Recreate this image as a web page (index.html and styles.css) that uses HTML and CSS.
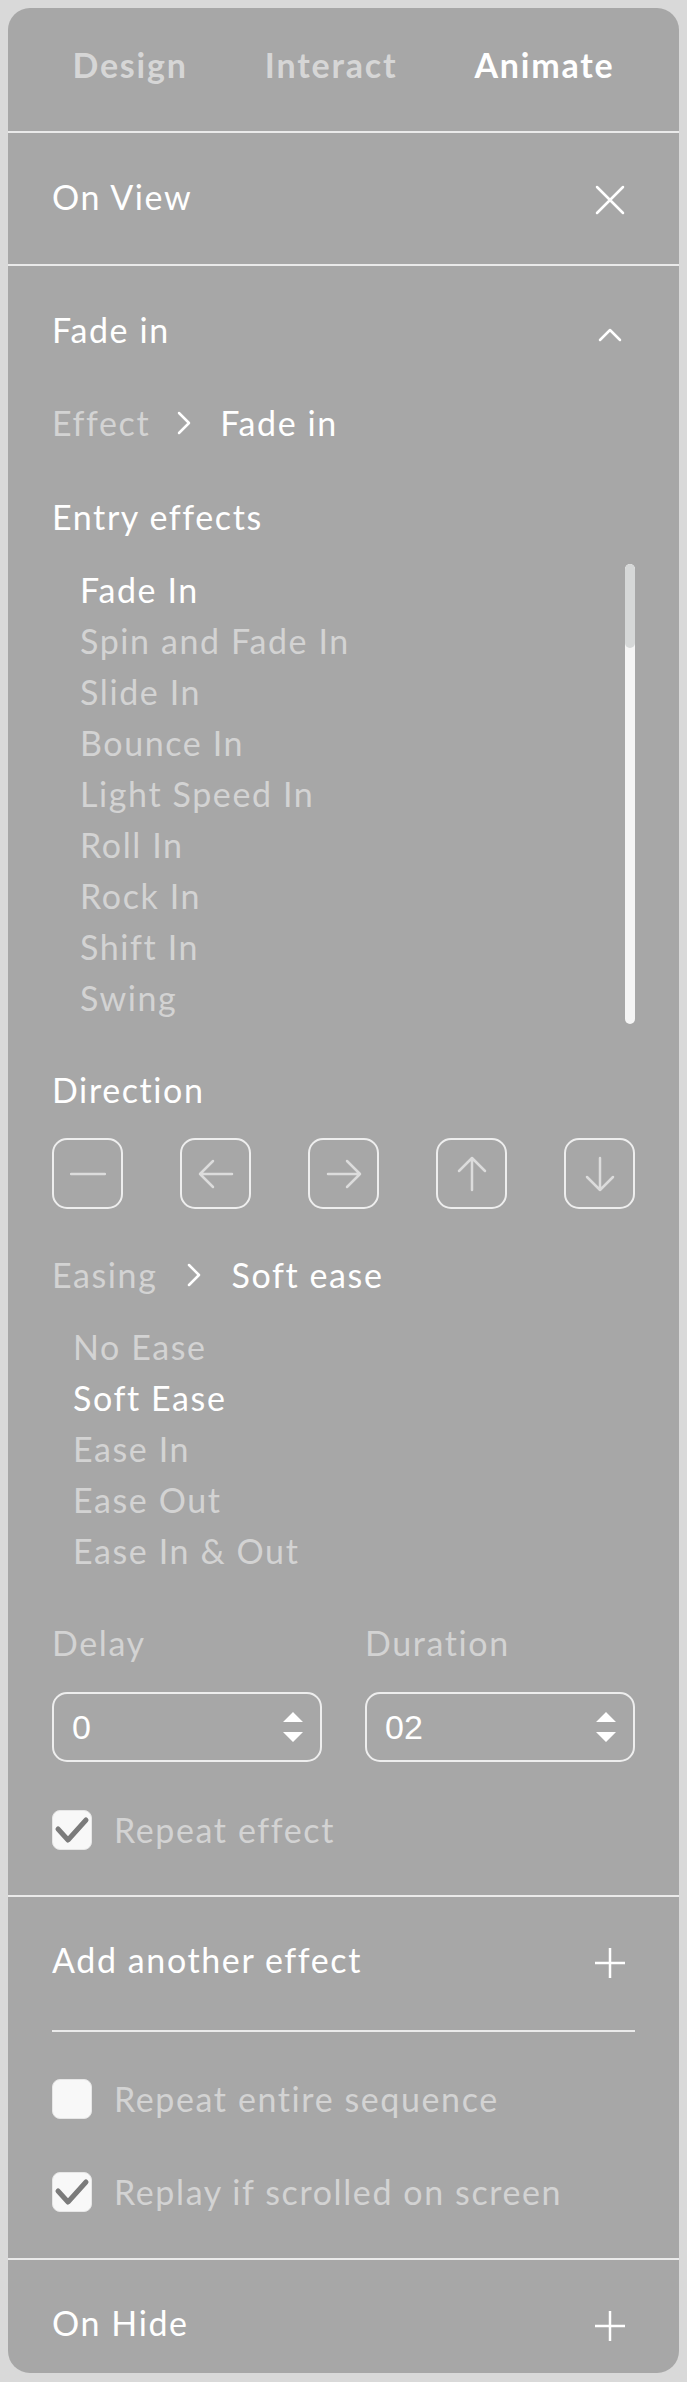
FILE: index.html
```html
<!DOCTYPE html>
<html lang="en">
    <head>
        <meta charset="UTF-8" />
        <meta name="viewport" content="width=device-width, initial-scale=1" />
        <link rel="stylesheet" href="styles.css">
        <title>Animate</title>
    </head>

    <body>
        <section class="panel">
            <nav class="tabs">
                <span>Design</span>
                <span>Interact</span>
                <span class="active">Animate</span>
            </nav>

            <div class="row head">
                <p>On View</p>
                <span class="icon">
                    <svg viewBox="0 0 30 30" width="30" height="30">
                        <path d="M2 2 L28 28 M28 2 L2 28" />
                    </svg>
                </span>
            </div>

            <div class="effect">
                <div class="row">
                    <p>Fade in</p>
                    <span class="icon">
                        <svg viewBox="0 0 30 30" width="30" height="30">
                            <path d="M5 22 L15 12 L25 22" />
                        </svg>
                    </span>
                </div>

                <div class="crumb">
                    <span class="muted">Effect</span>
                    <svg class="chev" viewBox="0 0 16 24" width="16" height="24">
                        <path d="M3 2 L13 12 L3 22" />
                    </svg>
                    <span>Fade in</span>
                </div>

                <p class="label">Entry effects</p>

                <div class="effects">
                    <ul>
                        <li class="active">Fade In</li>
                        <li>Spin and Fade In</li>
                        <li>Slide In</li>
                        <li>Bounce In</li>
                        <li>Light Speed In</li>
                        <li>Roll In</li>
                        <li>Rock In</li>
                        <li>Shift In</li>
                        <li>Swing</li>
                    </ul>
                    <div class="scrollbar"><div class="thumb"></div></div>
                </div>

                <p class="label direction">Direction</p>

                <ul class="dirs">
                    <li>
                        <svg viewBox="0 0 36 36" width="36" height="36">
                            <path d="M1 18 L35 18" />
                        </svg>
                    </li>
                    <li>
                        <svg viewBox="0 0 36 36" width="36" height="36">
                            <path d="M34 18 L2 18 M15 5 L2 18 L15 31" />
                        </svg>
                    </li>
                    <li>
                        <svg viewBox="0 0 36 36" width="36" height="36">
                            <path d="M2 18 L34 18 M21 5 L34 18 L21 31" />
                        </svg>
                    </li>
                    <li>
                        <svg viewBox="0 0 36 36" width="36" height="36">
                            <path d="M18 34 L18 2 M5 15 L18 2 L31 15" />
                        </svg>
                    </li>
                    <li>
                        <svg viewBox="0 0 36 36" width="36" height="36">
                            <path d="M18 2 L18 34 M5 21 L18 34 L31 21" />
                        </svg>
                    </li>
                </ul>

                <div class="crumb easing">
                    <span class="muted">Easing</span>
                    <svg class="chev" viewBox="0 0 16 24" width="16" height="24">
                        <path d="M3 2 L13 12 L3 22" />
                    </svg>
                    <span>Soft ease</span>
                </div>

                <ul class="ease-list">
                    <li>No Ease</li>
                    <li class="active">Soft Ease</li>
                    <li>Ease In</li>
                    <li>Ease Out</li>
                    <li>Ease In &amp; Out</li>
                </ul>

                <div class="fields">
                    <label class="muted">Delay</label>
                    <label class="muted">Duration</label>
                    <div class="number">
                        <span>0</span>
                        <svg viewBox="0 0 20 30" width="20" height="30">
                            <path d="M10 0 L20 10 L0 10 Z M0 20 L20 20 L10 30 Z" />
                        </svg>
                    </div>
                    <div class="number">
                        <span>02</span>
                        <svg viewBox="0 0 20 30" width="20" height="30">
                            <path d="M10 0 L20 10 L0 10 Z M0 20 L20 20 L10 30 Z" />
                        </svg>
                    </div>
                </div>

                <div class="check first">
                    <span class="box checked">
                        <svg viewBox="0 0 40 40" width="40" height="40">
                            <path d="M6 19 L16 30 L34 10" />
                        </svg>
                    </span>
                    <span class="muted">Repeat effect</span>
                </div>
            </div>

            <div class="add">
                <div class="row">
                    <p>Add another effect</p>
                    <span class="icon">
                        <svg viewBox="0 0 30 30" width="30" height="30">
                            <path d="M15 0 L15 30 M0 15 L30 15" />
                        </svg>
                    </span>
                </div>
                <hr />
                <div class="check">
                    <span class="box"></span>
                    <span class="muted">Repeat entire sequence</span>
                </div>
                <div class="check second">
                    <span class="box checked">
                        <svg viewBox="0 0 40 40" width="40" height="40">
                            <path d="M6 19 L16 30 L34 10" />
                        </svg>
                    </span>
                    <span class="muted">Replay if scrolled on screen</span>
                </div>
            </div>

            <div class="row foot">
                <p>On Hide</p>
                <span class="icon">
                    <svg viewBox="0 0 30 30" width="30" height="30">
                        <path d="M15 0 L15 30 M0 15 L30 15" />
                    </svg>
                </span>
            </div>
        </section>
    </body>
</html>
```

FILE: styles.css
```css
html {
    background-color: #d9d9d9;
}
body {
    margin: 8px;
    font-family: "Lato", "Open Sans", sans-serif;
    font-size: 34px;
    letter-spacing: 1.6px;
    color: #ffffff;
}
p,
ul {
    margin: 0;
    padding: 0;
    list-style: none;
}

.panel {
    background-color: #a7a7a7;
    border-radius: 22px;
    overflow: hidden;
}

/* tabs */
.tabs {
    display: flex;
    justify-content: center;
    gap: 77px;
    padding: 37px 0 46px;
    line-height: 40px;
    font-weight: 700;
    letter-spacing: 1.8px;
    color: #d6d6d6;
    border-bottom: 2px solid #eaeaea;
}
.tabs .active {
    color: #ffffff;
}

/* header rows */
.row {
    display: flex;
    justify-content: space-between;
    align-items: center;
    line-height: 40px;
}
.row .icon {
    width: 30px;
    height: 30px;
    margin-right: 10px;
}
.row svg path {
    fill: none;
    stroke: #ffffff;
    stroke-width: 2.5;
    stroke-linecap: round;
    stroke-linejoin: round;
}
.head {
    padding: 44px 44px 47px;
    border-bottom: 2px solid #eaeaea;
}
.foot {
    padding: 43px 44px 30px;
}

.muted {
    color: #d3d3d3;
}

/* effect block */
.effect {
    padding: 44px 44px 45px;
    border-bottom: 2px solid #eaeaea;
}
.crumb {
    display: flex;
    align-items: center;
    margin-top: 53px;
    line-height: 40px;
}
.crumb .chev {
    margin: 0 28px 0 26px;
}
.crumb.easing .chev {
    margin: 0 29px 0 29px;
}
.chev path {
    fill: none;
    stroke: #ffffff;
    stroke-width: 2.5;
    stroke-linecap: round;
    stroke-linejoin: round;
}
.label {
    margin-top: 54px;
    line-height: 40px;
}
.effects {
    display: flex;
    justify-content: space-between;
    margin-top: 27px;
}
.effects ul {
    padding-left: 28px;
    line-height: 51px;
    color: #d3d3d3;
}
li.active {
    color: #ffffff;
}
.scrollbar {
    width: 10px;
    height: 460px;
    border-radius: 5px;
    background-color: #f5f5f5;
    overflow: hidden;
}
.thumb {
    height: 84px;
    border-radius: 5px;
    background-color: #d6d8d8;
}
.direction {
    margin-top: 46px;
}

.dirs {
    display: flex;
    justify-content: space-between;
    margin-top: 28px;
}
.dirs li {
    width: 71px;
    height: 71px;
    box-sizing: border-box;
    border: 2.5px solid #eeeeee;
    border-radius: 15px;
    display: flex;
    align-items: center;
    justify-content: center;
}
.dirs path {
    fill: none;
    stroke: #dcdcdc;
    stroke-width: 2.5;
    stroke-linecap: round;
    stroke-linejoin: round;
}

.crumb.easing {
    margin-top: 46px;
}
.ease-list {
    margin-top: 26px;
    padding-left: 21px;
    line-height: 51px;
    color: #d3d3d3;
}

/* delay / duration */
.fields {
    display: grid;
    grid-template-columns: 1fr 1fr;
    column-gap: 43px;
    row-gap: 29px;
    margin-top: 47px;
    line-height: 40px;
}
.number {
    height: 70px;
    box-sizing: border-box;
    border: 2.5px solid #eeeeee;
    border-radius: 15px;
    padding: 0 17px 0 18px;
    display: flex;
    align-items: center;
    justify-content: space-between;
    font-family: "Liberation Sans", Arial, sans-serif;
    font-size: 34px;
    letter-spacing: 0;
}
.number path {
    fill: #ffffff;
}

/* checkboxes */
.check {
    display: flex;
    align-items: center;
    gap: 22px;
    line-height: 40px;
    margin-top: 47px;
}
.check.first {
    margin-top: 48px;
}
.check.second {
    margin-top: 53px;
}
.box {
    width: 40px;
    height: 40px;
    box-sizing: border-box;
    border-radius: 8px;
    background-color: #f8f8f8;
    border: 1px solid #e6e6e6;
}
.box svg {
    display: block;
    margin: -1px;
}
.box path {
    fill: none;
    stroke: #7b7b7b;
    stroke-width: 5;
    stroke-linecap: round;
    stroke-linejoin: round;
}

/* add another effect */
.add {
    padding: 43px 44px 46px;
    border-bottom: 2px solid #eaeaea;
}
.add hr {
    margin: 50px 0 0;
    border: 0;
    height: 2px;
    background-color: #eaeaea;
}
```
